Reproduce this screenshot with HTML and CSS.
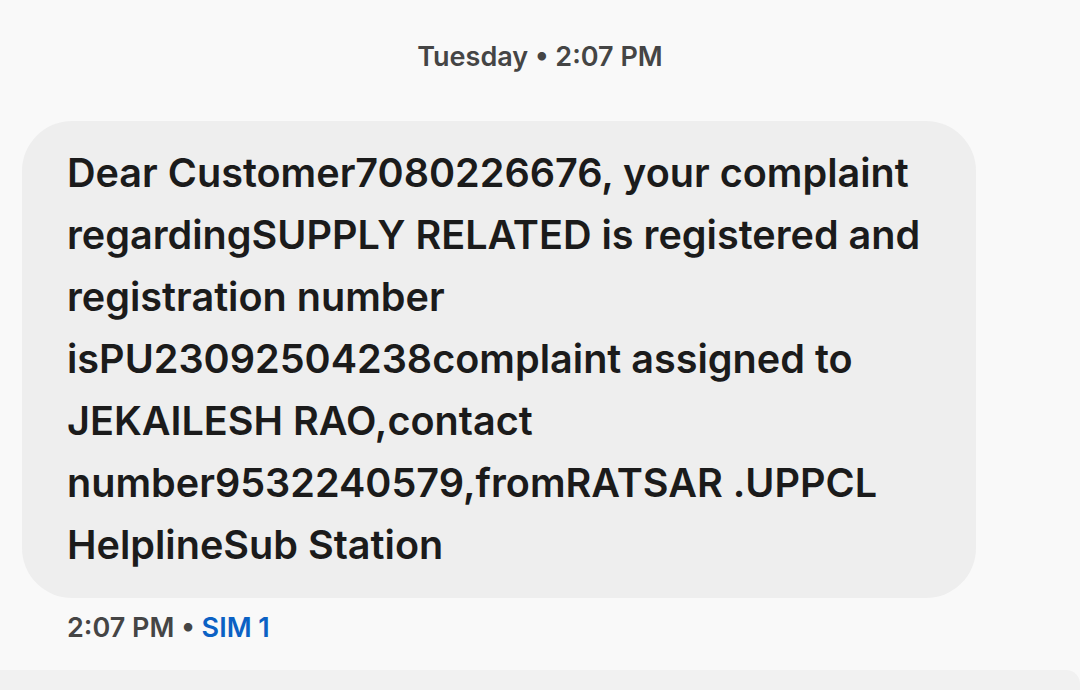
FILE: index.html
```html
<!DOCTYPE html>
<html>
<head>
<meta charset="utf-8">
<link rel="stylesheet" href="styles.css">
</head>
<body>
<div class="thread">
  <div class="date">Tuesday • 2:07 PM</div>
  <div class="bubble">Dear Customer7080226676, your complaint regardingSUPPLY RELATED is registered and registration number isPU23092504238complaint assigned to JEKAILESH RAO,contact number9532240579,fromRATSAR .UPPCL HelplineSub Station</div>
  <div class="meta">2:07 PM • <span class="sim">SIM 1</span></div>
</div>
<div class="composer"></div>
</body>
</html>
```
FILE: styles.css
```css
html, body {
  margin: 0;
  padding: 0;
  background: #f9f9f9;
  width: 1080px;
  height: 690px;
  overflow: hidden;
  font-family: Inter, "Open Sans", sans-serif;
}
.thread {
  display: flex;
  flex-direction: column;
  height: 670px;
}
.date {
  text-align: center;
  font-size: 27px;
  font-weight: 600;
  color: #454545;
  padding-top: 40px;
  line-height: 34px;
}
.bubble {
  margin: 47px 0 0 22px;
  width: 954px;
  box-sizing: border-box;
  background: #eeeeee;
  border-radius: 50px;
  padding: 21px 35px 22px 45px;
  font-size: 39.6px;
  font-weight: 600;
  line-height: 62px;
  color: #1b1b1b;
}
.meta {
  margin: 13px 0 0 67px;
  font-size: 27px;
  font-weight: 600;
  color: #454545;
  line-height: 34px;
}
.sim {
  color: #0b61c4;
}
.composer {
  height: 20px;
  background: #f1f1f1;
  border-top-right-radius: 14px;
}
```
